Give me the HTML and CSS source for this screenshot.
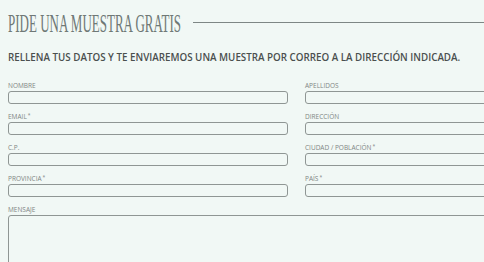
FILE: index.html
```html
<!DOCTYPE html>
<html lang="es">
<head>
<meta charset="utf-8">
<title>Pide una muestra gratis</title>
<link rel="stylesheet" href="styles.css">
</head>
<body>
<div class="page">
  <div class="title-row">
    <h1 class="title"><span class="title-text">PIDE UNA MUESTRA GRATIS</span></h1>
    <div class="title-line"></div>
  </div>
  <p class="intro">RELLENA TUS DATOS Y TE ENVIAREMOS UNA MUESTRA POR CORREO A LA DIRECCIÓN INDICADA.</p>
  <form class="form">
    <div class="field"><label class="label">NOMBRE</label><input class="input" type="text"></div>
    <div class="field"><label class="label">APELLIDOS</label><input class="input" type="text"></div>
    <div class="field"><label class="label">EMAIL<sup class="req">*</sup></label><input class="input" type="text"></div>
    <div class="field"><label class="label">DIRECCIÓN</label><input class="input" type="text"></div>
    <div class="field"><label class="label">C.P.</label><input class="input" type="text"></div>
    <div class="field"><label class="label">CIUDAD / POBLACIÓN<sup class="req">*</sup></label><input class="input" type="text"></div>
    <div class="field"><label class="label">PROVINCIA<sup class="req">*</sup></label><input class="input" type="text"></div>
    <div class="field"><label class="label">PAÍS<sup class="req">*</sup></label><input class="input" type="text"></div>
    <div class="field field-wide"><label class="label">MENSAJE</label><textarea class="textarea"></textarea></div>
  </form>
</div>
</body>
</html>
```
FILE: styles.css
```css
html, body {
  margin: 0;
  padding: 0;
  background: #f1f8f5;
  overflow: hidden;
}
.page {
  width: 577px;
  padding: 0 8px;
  font-family: "Open Sans", "Liberation Sans", sans-serif;
}
.title-row {
  display: flex;
  align-items: center;
  padding-top: 9px;
  height: 27px;
}
.title {
  margin: 0;
  width: 171px;
  flex: none;
  font-family: "Liberation Serif", serif;
  font-weight: normal;
  font-size: 26px;
  line-height: 27px;
  color: #6f7876;
  white-space: nowrap;
  overflow: visible;
}
.title-text {
  display: inline-block;
  transform: scaleX(0.5) translateY(1px);
  transform-origin: left center;
}
.title-line {
  flex: 1;
  height: 1px;
  background: #7e8785;
  margin-left: 14px;
  margin-right: -100px;
}
.intro {
  margin: 15px 0 0;
  font-size: 9.8px;
  line-height: 14px;
  font-weight: 600;
  color: #4a4f4e;
  white-space: nowrap;
}
.form {
  display: grid;
  grid-template-columns: 280px 280px;
  column-gap: 17px;
  row-gap: 9px;
  margin-top: 17px;
}
.field {
  display: flex;
  flex-direction: column;
}
.field-wide {
  grid-column: 1 / 3;
}
.label {
  font-size: 6.5px;
  line-height: 7px;
  height: 7px;
  color: #7f8684;
  margin-bottom: 2px;
}
.req {
  font-size: 5px;
  vertical-align: top;
  line-height: 5px;
  margin-left: 1px;
}
.input, .textarea {
  box-sizing: border-box;
  height: 13px;
  border: 1px solid #8f9694;
  border-radius: 3px;
  background: transparent;
  margin: 0;
  padding: 0;
  font: inherit;
}
.textarea {
  height: 80px;
  resize: none;
  display: block;
}
```
